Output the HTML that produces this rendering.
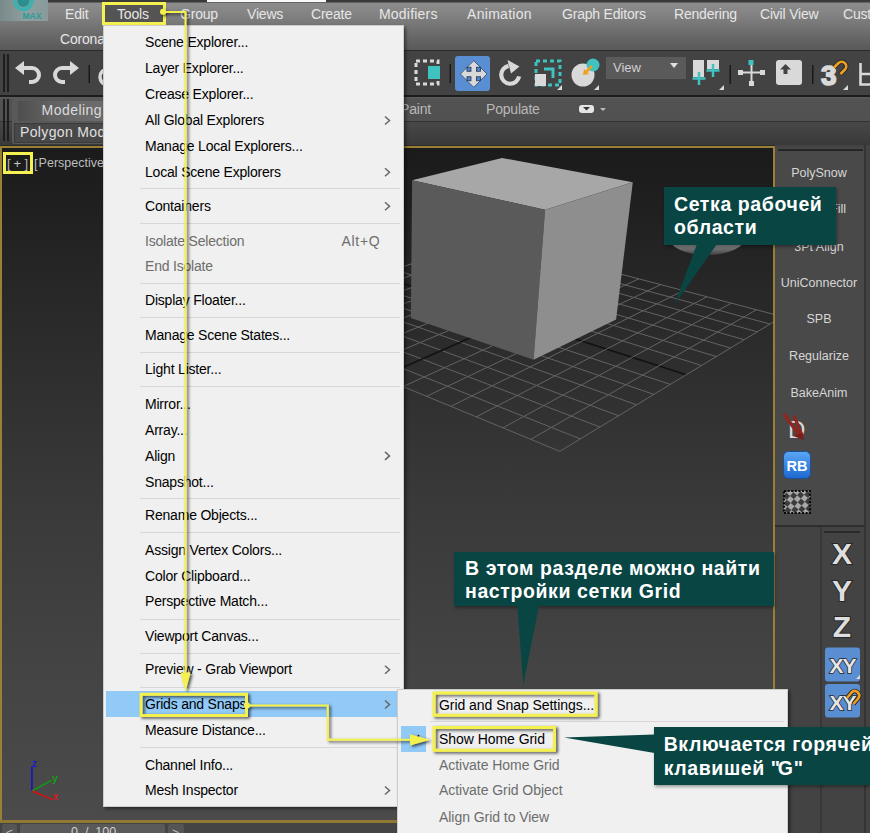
<!DOCTYPE html>
<html><head><meta charset="utf-8"><style>
html,body{margin:0;padding:0;width:870px;height:833px;overflow:hidden;background:#2b2b2b}
body{position:relative;font-family:"Liberation Sans",sans-serif}
.t{position:absolute;white-space:nowrap;line-height:1;font-family:"Liberation Sans",sans-serif}
</style></head><body>
<div style="position:absolute;left:0;top:0;width:870px;height:50px;background:linear-gradient(#3a3a3a 0px,#3a3a3a 2px,#8c8c8c 3px,#858585 12px,#767676 25px,#666666 38px,#5a5a5a 49px)"></div>
<div style="position:absolute;left:48px;top:0;width:822px;height:2px;background:#3a3a3a"></div>
<div style="position:absolute;left:207px;top:0;width:119px;height:1.5px;background:#fafafa"></div>
<div style="position:absolute;left:0;top:0;width:48px;height:20.5px;background:linear-gradient(90deg,#7a8a8a,#8fa0a0 55%,#889a9a)"></div>
<svg style="position:absolute;left:0;top:0" width="48" height="21"><circle cx="23.5" cy="1" r="8.5" fill="none" stroke="#3ab2b2" stroke-width="3.5"/><circle cx="23.5" cy="1" r="6" fill="#2b8f90"/><text x="22.5" y="18.6" font-family="Liberation Sans" font-weight="bold" font-size="9.5" fill="#2a9c9c" textLength="19" lengthAdjust="spacingAndGlyphs">MAX</text></svg>
<div class="t" style="left:65px;top:6.75px;font-size:14px;color:#e6e6e6;font-weight:400;letter-spacing:-0.2px;letter-spacing:-0.2px;">Edit</div>

<div class="t" style="left:180px;top:6.75px;font-size:14px;color:#e6e6e6;font-weight:400;letter-spacing:-0.2px;letter-spacing:-0.2px;">Group</div>

<div class="t" style="left:247px;top:6.75px;font-size:14px;color:#e6e6e6;font-weight:400;letter-spacing:-0.2px;letter-spacing:-0.2px;">Views</div>

<div class="t" style="left:311px;top:6.75px;font-size:14px;color:#e6e6e6;font-weight:400;letter-spacing:-0.2px;letter-spacing:-0.2px;">Create</div>

<div class="t" style="left:379px;top:6.75px;font-size:14px;color:#e6e6e6;font-weight:400;letter-spacing:-0.2px;letter-spacing:0.2px;">Modifiers</div>

<div class="t" style="left:467px;top:6.75px;font-size:14px;color:#e6e6e6;font-weight:400;letter-spacing:-0.2px;letter-spacing:0.3px;">Animation</div>

<div class="t" style="left:562px;top:6.75px;font-size:14px;color:#e6e6e6;font-weight:400;letter-spacing:-0.2px;letter-spacing:-0.2px;">Graph Editors</div>

<div class="t" style="left:674px;top:6.75px;font-size:14px;color:#e6e6e6;font-weight:400;letter-spacing:-0.2px;letter-spacing:-0.2px;">Rendering</div>

<div class="t" style="left:760px;top:6.75px;font-size:14px;color:#e6e6e6;font-weight:400;letter-spacing:-0.2px;letter-spacing:-0.2px;">Civil View</div>

<div class="t" style="left:843px;top:6.75px;font-size:14px;color:#e6e6e6;font-weight:400;letter-spacing:-0.2px;letter-spacing:-0.2px;">Customize</div>

<div class="t" style="left:60px;top:31.65px;font-size:14px;color:#e6e6e6;font-weight:400;letter-spacing:-0.2px;">Corona</div>

<div style="position:absolute;left:102px;top:2px;width:64px;height:23px;box-sizing:border-box;border:3px solid #f4f150;background:#545454"></div>
<div class="t" style="left:117px;top:6.75px;font-size:14px;color:#e6e6e6;font-weight:400;letter-spacing:-0.2px;">Tools</div>

<div style="position:absolute;left:0;top:49.5px;width:870px;height:1.5px;background:#2a2a2a"></div>
<div style="position:absolute;left:0;top:51px;width:870px;height:44.5px;background:#434343"></div>
<div style="position:absolute;left:0;top:95px;width:870px;height:2px;background:#1c1c1c"></div>
<div style="position:absolute;left:0;top:97px;width:870px;height:23.5px;background:linear-gradient(#5e5e5e 0px,#525252 2px,#515151 100%)"></div>
<div style="position:absolute;left:0;top:120.5px;width:870px;height:1.5px;background:#323232"></div>
<div style="position:absolute;left:0;top:122px;width:870px;height:22.5px;background:linear-gradient(#484848,#393939)"></div>
<div style="position:absolute;left:0;top:144.5px;width:870px;height:1px;background:#2a2a2a"></div>
<div style="position:absolute;left:3px;top:54px;width:1.5px;height:38px;background:#1e1e1e"></div>
<div style="position:absolute;left:3px;top:99px;width:1.5px;height:42px;background:#1e1e1e"></div>
<div style="position:absolute;left:7px;top:54px;width:1.5px;height:38px;background:#1e1e1e"></div>
<div style="position:absolute;left:7px;top:99px;width:1.5px;height:42px;background:#1e1e1e"></div>
<div style="position:absolute;left:12px;top:97.5px;width:100px;height:46px;background:#595959;border-radius:2px"></div>
<div style="position:absolute;left:18px;top:101px;width:95px;height:20px;background:linear-gradient(90deg,#4e4e4e,#626262 35%,#6a6a6a 70%,#6c6c6c)"></div>
<div class="t" style="left:41.6px;top:102.65px;font-size:14px;color:#dcdcdc;font-weight:400;letter-spacing:-0.2px;letter-spacing:0.45px;">Modeling</div>

<div style="position:absolute;left:14px;top:122.5px;width:100px;height:20.5px;background:#484848;border:1px solid #3a3a3a;box-sizing:border-box"></div>
<div class="t" style="left:20px;top:124.75px;font-size:14px;color:#e0e0e0;font-weight:400;letter-spacing:-0.2px;letter-spacing:0.35px;">Polygon Modeling</div>

<div class="t" style="left:400px;top:102.15px;font-size:14px;color:#b8b8b8;font-weight:400;letter-spacing:-0.2px;">Paint</div>

<div class="t" style="left:486px;top:102.15px;font-size:14px;color:#b8b8b8;font-weight:400;letter-spacing:-0.2px;">Populate</div>

<svg style="position:absolute;left:0;top:50px" width="870" height="46" viewBox="0 50 870 46">
<g fill="none" stroke="#d9d9d9" stroke-width="4" stroke-linecap="butt">
<path d="M22 68 H32 A7 7 0 0 1 32 82 H29"/>
<path d="M72 68 H62 A7 7 0 0 0 62 82 H65"/>
</g>
<path d="M15 68 L24 61 V75 Z" fill="#d9d9d9"/>
<path d="M79 68 L70 61 V75 Z" fill="#d9d9d9"/>
<rect x="88.5" y="65" width="1.5" height="18" fill="#1a1a1a"/>
<circle cx="108" cy="77" r="8" fill="none" stroke="#d9d9d9" stroke-width="3.5"/>
<rect x="449.5" y="64" width="1.5" height="19" fill="#1a1a1a"/>
<rect x="729.5" y="65" width="1.5" height="19" fill="#1a1a1a"/>
<rect x="812" y="65" width="1.5" height="19" fill="#1a1a1a"/>
<!-- select region -->
<rect x="416" y="61" width="22" height="23" fill="none" stroke="#d9d9d9" stroke-width="3" stroke-dasharray="4 3"/>
<rect x="428" y="66" width="12" height="13" fill="#3fc2c0"/>
<!-- move -->
<rect x="455" y="56" width="35" height="35" rx="3" fill="#5a8ed3"/>
<polygon points="473.70,60.70 480.20,67.20 478.90,68.80 480.50,67.50 487.00,74.00 480.50,80.50 478.90,79.20 480.20,80.80 473.70,87.30 467.20,80.80 468.50,79.20 466.90,80.50 460.40,74.00 466.90,67.50 468.50,68.80 467.20,67.20" fill="#d9d9d9" stroke="#3d5f8f" stroke-width="1"/>
<rect x="466.95" y="67.25" width="4" height="4" fill="#4f82c8" stroke="#2b3d5c" stroke-width="0.9"/><rect x="466.95" y="76.75" width="4" height="4" fill="#4f82c8" stroke="#2b3d5c" stroke-width="0.9"/><rect x="476.45" y="67.25" width="4" height="4" fill="#4f82c8" stroke="#2b3d5c" stroke-width="0.9"/><rect x="476.45" y="76.75" width="4" height="4" fill="#4f82c8" stroke="#2b3d5c" stroke-width="0.9"/>
<!-- rotate -->
<path d="M519.1 76.4 A9 9 0 1 1 508.6 65.9" fill="none" stroke="#d9d9d9" stroke-width="4.2"/>
<path d="M507.5 60 L519.5 66.5 L511 73.5 Z" fill="#d9d9d9"/>
<!-- scale -->
<rect x="536" y="61" width="24" height="24" fill="none" stroke="#3fc2c0" stroke-width="3" stroke-dasharray="4 3"/>
<path d="M544 69 H553 V78" fill="none" stroke="#3fc2c0" stroke-width="3"/>
<rect x="535" y="74" width="11" height="12" fill="#d9d9d9"/>
<path d="M557 90 L562 90 L562 85 Z" fill="#d9d9d9"/>
<!-- placement -->
<circle cx="583" cy="75" r="11.5" fill="#d9d9d9"/>
<circle cx="593" cy="65" r="6.5" fill="#3fc2c0"/>
<path d="M592 66 L585 73" stroke="#f0a020" stroke-width="2.5"/>
<path d="M583 75 L589 74 L584 69 Z" fill="#f0a020"/>
<path d="M594 90 L599 90 L599 85 Z" fill="#d9d9d9"/>
<!-- view dropdown -->
<rect x="606" y="57" width="80" height="22" fill="#5a5a5a"/>
<path d="M670 63 H678 L674 68 Z" fill="#e0e0e0"/>
<!-- mirror -->
<rect x="693" y="60" width="11" height="17" fill="#d9d9d9"/>
<rect x="707" y="60" width="12" height="9" fill="#d9d9d9"/>
<path d="M699 72 V85 M692.5 78.5 H705.5" stroke="#3fc2c0" stroke-width="2.5"/>
<path d="M713 64 V77 M706.5 70.5 H719.5" stroke="#3fc2c0" stroke-width="2.5"/>
<path d="M719 90 L724 90 L724 85 Z" fill="#d9d9d9"/>
<!-- align crosshair -->
<path d="M751.5 63 V85 M739 72.5 H764" stroke="#d9d9d9" stroke-width="2"/>
<rect x="748.5" y="60" width="5" height="5" fill="#3fc2c0"/>
<rect x="738" y="70" width="5" height="5" fill="#d9d9d9"/><rect x="760" y="70" width="5" height="5" fill="#d9d9d9"/>
<rect x="749" y="81" width="5" height="5" fill="#d9d9d9"/>
<!-- rounded square up -->
<rect x="776" y="60" width="26" height="25" rx="3" fill="#d9d9d9"/>
<path d="M785.5 64 L791 69.5 H787.5 V74 H783.5 V69.5 H780 Z" fill="#444"/>
<!-- 3 magnet -->
<text x="821" y="85" font-family="Liberation Sans" font-weight="bold" font-size="28" fill="#d9d9d9" stroke="#d9d9d9" stroke-width="1.6">3</text>
<path d="M834 67.5 L838.5 63 A4.6 4.6 0 0 1 845 69.5 L840.5 74" fill="none" stroke="#2a2a2a" stroke-width="4.4"/><path d="M834 67.5 L838.5 63 A4.6 4.6 0 0 1 845 69.5 L840.5 74" fill="none" stroke="#f0a020" stroke-width="2.6"/>
<path d="M843 90 L848 90 L848 85 Z" fill="#d9d9d9"/>
<path d="M860.5 63 V84.5 H871 M860.5 74 H871" fill="none" stroke="#d9d9d9" stroke-width="2.6"/>
</svg>
<div class="t" style="left:613px;top:61.00px;font-size:13px;color:#d0d0d0;font-weight:400;">View</div>

<svg style="position:absolute;left:575px;top:100px" width="40" height="18"><rect x="4" y="5" width="15" height="8" rx="3" fill="#e6e6e6"/><path d="M8 7 H15 L11.5 10.5 Z" fill="#333"/><path d="M25 8 H31 L28 11 Z" fill="#bbb"/></svg>
<div style="position:absolute;left:0;top:145.5px;width:775px;height:677px;box-sizing:border-box;border:2px solid #9a8034;background:linear-gradient(#1b1b1b 0%,#1f1f1f 8%,#282828 22%,#393939 52%,#434343 75%,#4b4b4b 100%)"></div>
<div style="position:absolute;left:775px;top:145px;width:95px;height:688px;background:#434343"></div>
<div style="position:absolute;left:775px;top:147.5px;width:90px;height:378px;background:#494949"></div>
<div style="position:absolute;left:778px;top:149px;width:85px;height:2px;background:#262626"></div>
<div style="position:absolute;left:864px;top:145px;width:2px;height:688px;background:#353535"></div>
<div style="position:absolute;left:775px;top:524.5px;width:90px;height:2px;background:#2e2e2e"></div>
<div style="position:absolute;left:820px;top:527px;width:1.5px;height:306px;background:#383838"></div>
<div style="position:absolute;left:824px;top:531px;width:36px;height:2px;background:#2a2a2a"></div>
<div class="t" style="left:746px;width:100px;text-align:right;top:203px;font-size:12.5px;color:#d6d6d6">PolyFill</div>
<div class="t" style="left:777px;width:84px;text-align:center;top:167px;font-size:12.5px;color:#d6d6d6">PolySnow</div>
<div class="t" style="left:777px;width:84px;text-align:center;top:240.5px;font-size:12.5px;color:#d6d6d6">3Pt Align</div>
<div class="t" style="left:777px;width:84px;text-align:center;top:276.7px;font-size:12.5px;color:#d6d6d6">UniConnector</div>
<div class="t" style="left:777px;width:84px;text-align:center;top:312.7px;font-size:12.5px;color:#d6d6d6">SPB</div>
<div class="t" style="left:777px;width:84px;text-align:center;top:350px;font-size:12.5px;color:#d6d6d6">Regularize</div>
<div class="t" style="left:777px;width:84px;text-align:center;top:386.5px;font-size:12.5px;color:#d6d6d6">BakeAnim</div>
<svg style="position:absolute;left:0;top:0" width="870" height="833"><defs><clipPath id="vp"><rect x="2" y="147" width="771" height="673"/></clipPath></defs><g clip-path="url(#vp)"><line x1="245.1" y1="321.4" x2="484.9" y2="238.4" stroke="#636363" stroke-width="1"/><line x1="245.1" y1="321.4" x2="559.8" y2="451.3" stroke="#636363" stroke-width="1"/><line x1="262.4" y1="328.5" x2="502.2" y2="242.9" stroke="#636363" stroke-width="1"/><line x1="266.0" y1="314.2" x2="580.3" y2="438.9" stroke="#636363" stroke-width="1"/><line x1="280.4" y1="335.9" x2="520.1" y2="247.6" stroke="#636363" stroke-width="1"/><line x1="286.2" y1="307.2" x2="599.9" y2="427.0" stroke="#636363" stroke-width="1"/><line x1="299.0" y1="343.6" x2="538.4" y2="252.4" stroke="#636363" stroke-width="1"/><line x1="305.7" y1="300.4" x2="618.6" y2="415.7" stroke="#636363" stroke-width="1"/><line x1="318.2" y1="351.6" x2="557.3" y2="257.4" stroke="#636363" stroke-width="1"/><line x1="324.6" y1="293.9" x2="636.6" y2="404.8" stroke="#636363" stroke-width="1"/><line x1="338.2" y1="359.8" x2="576.7" y2="262.5" stroke="#636363" stroke-width="1"/><line x1="342.9" y1="287.5" x2="653.9" y2="394.4" stroke="#636363" stroke-width="1"/><line x1="359.0" y1="368.4" x2="596.8" y2="267.8" stroke="#636363" stroke-width="1"/><line x1="360.7" y1="281.4" x2="670.4" y2="384.4" stroke="#636363" stroke-width="1"/><line x1="380.7" y1="377.3" x2="617.5" y2="273.2" stroke="#121212" stroke-width="1.6"/><line x1="377.9" y1="275.4" x2="686.3" y2="374.7" stroke="#121212" stroke-width="1.6"/><line x1="403.1" y1="386.6" x2="638.8" y2="278.9" stroke="#636363" stroke-width="1"/><line x1="394.6" y1="269.7" x2="701.6" y2="365.5" stroke="#636363" stroke-width="1"/><line x1="426.6" y1="396.3" x2="660.8" y2="284.6" stroke="#636363" stroke-width="1"/><line x1="410.7" y1="264.1" x2="716.4" y2="356.6" stroke="#636363" stroke-width="1"/><line x1="451.0" y1="406.3" x2="683.5" y2="290.6" stroke="#636363" stroke-width="1"/><line x1="426.4" y1="258.6" x2="730.5" y2="348.0" stroke="#636363" stroke-width="1"/><line x1="476.4" y1="416.8" x2="707.0" y2="296.8" stroke="#636363" stroke-width="1"/><line x1="441.7" y1="253.3" x2="744.2" y2="339.7" stroke="#636363" stroke-width="1"/><line x1="503.0" y1="427.8" x2="731.3" y2="303.2" stroke="#636363" stroke-width="1"/><line x1="456.5" y1="248.2" x2="757.4" y2="331.8" stroke="#636363" stroke-width="1"/><line x1="530.8" y1="439.3" x2="756.4" y2="309.8" stroke="#636363" stroke-width="1"/><line x1="470.9" y1="243.2" x2="770.1" y2="324.1" stroke="#636363" stroke-width="1"/><line x1="559.8" y1="451.3" x2="782.4" y2="316.6" stroke="#636363" stroke-width="1"/><line x1="484.9" y1="238.4" x2="782.4" y2="316.6" stroke="#636363" stroke-width="1"/>
<polygon points="412.1,180.2 502,158 632.8,182.2 545.1,209.8" fill="#a7a7a7"/>
<polygon points="412.1,180.2 545.1,209.8 533.6,359.8 410.9,318.1" fill="#5a5a5a"/>
<polygon points="545.1,209.8 632.8,182.2 616.1,319.5 533.6,359.8" fill="#8e8e8e"/>
<defs><linearGradient id="gz" x1="0" y1="0" x2="0" y2="1"><stop offset="0.6" stop-color="#a8a8a8"/><stop offset="1" stop-color="#404040"/></linearGradient></defs><ellipse cx="707" cy="238" rx="38" ry="17" fill="url(#gz)"/></g></svg>
<div style="position:absolute;left:3px;top:152px;width:30px;height:22px;box-sizing:border-box;border:3px solid #f4f150"></div>
<div class="t" style="left:7px;top:157.00px;font-size:13px;color:#b8b8b8;font-weight:400;">[</div>

<div class="t" style="left:13.5px;top:157.00px;font-size:13px;color:#c8c8c8;font-weight:400;">+</div>

<div class="t" style="left:24.5px;top:157.00px;font-size:13px;color:#b8b8b8;font-weight:400;">]</div>

<div class="t" style="left:34px;top:157.00px;font-size:13px;color:#b8b8b8;font-weight:400;">[</div>

<div class="t" style="left:38.6px;top:156.92px;font-size:12.5px;color:#bdbdbd;font-weight:400;">Perspective</div>

<svg style="position:absolute;left:20px;top:755px" width="50" height="50">
<path d="M11.9 36 V11.5" stroke="#1414c8" stroke-width="1.6"/>
<path d="M11.9 36 L31.7 25.2" stroke="#149614" stroke-width="1.6"/>
<path d="M11.9 36 L32.4 44.6" stroke="#d01414" stroke-width="1.6"/>
<text x="12" y="11.5" font-family="Liberation Sans" font-weight="bold" font-size="10" fill="#1a1ad0">z</text>
<text x="32" y="26.5" font-family="Liberation Sans" font-weight="bold" font-size="10.5" fill="#1a9a1a">y</text>
<text x="32.5" y="44.5" font-family="Liberation Sans" font-weight="bold" font-size="10" fill="#d81a1a">x</text>
</svg>
<div style="position:absolute;left:0;top:823px;width:775px;height:10px;background:#444"></div>
<div style="position:absolute;left:0;top:820px;width:775px;height:3px;background:#8e7832"></div>
<div style="position:absolute;left:2px;top:824px;width:15px;height:12px;background:#555;border-radius:2px"></div>
<div style="position:absolute;left:20px;top:824px;width:145px;height:12px;background:#5a5a5a;border-radius:2px"></div>
<div style="position:absolute;left:168px;top:824px;width:16px;height:12px;background:#555;border-radius:2px"></div>
<div class="t" style="left:71px;top:826.42px;font-size:12.5px;color:#d0d0d0;font-weight:400;">0&nbsp;&nbsp;/&nbsp;&nbsp;100</div>

<div class="t" style="left:6px;top:826.84px;font-size:12px;color:#c0c0c0;font-weight:400;">&lt;</div>

<div class="t" style="left:172px;top:826.84px;font-size:12px;color:#c0c0c0;font-weight:400;">&gt;</div>

<div style="position:absolute;left:103px;top:25px;width:301px;height:782px;background:#f0f0f0;border:1px solid #cdcdcd;box-sizing:border-box;box-shadow:2px 2px 3px rgba(0,0,0,0.45)"></div>
<div style="position:absolute;left:106px;top:691px;width:298px;height:26px;background:#91c9f7"></div>
<div style="position:absolute;left:140px;top:188.3px;width:260px;height:1px;background:#d7d7d7"></div>
<div style="position:absolute;left:140px;top:222.9px;width:260px;height:1px;background:#d7d7d7"></div>
<div style="position:absolute;left:140px;top:282.9px;width:260px;height:1px;background:#d7d7d7"></div>
<div style="position:absolute;left:140px;top:316.9px;width:260px;height:1px;background:#d7d7d7"></div>
<div style="position:absolute;left:140px;top:351.7px;width:260px;height:1px;background:#d7d7d7"></div>
<div style="position:absolute;left:140px;top:385.7px;width:260px;height:1px;background:#d7d7d7"></div>
<div style="position:absolute;left:140px;top:497.9px;width:260px;height:1px;background:#d7d7d7"></div>
<div style="position:absolute;left:140px;top:532.1px;width:260px;height:1px;background:#d7d7d7"></div>
<div style="position:absolute;left:140px;top:618.5px;width:260px;height:1px;background:#d7d7d7"></div>
<div style="position:absolute;left:140px;top:653.1px;width:260px;height:1px;background:#d7d7d7"></div>
<div style="position:absolute;left:140px;top:687.1px;width:260px;height:1px;background:#d7d7d7"></div>
<div style="position:absolute;left:140px;top:746.7px;width:260px;height:1px;background:#d7d7d7"></div>
<div class="t" style="left:145px;top:35.15px;font-size:14px;color:#000;font-weight:400;letter-spacing:-0.2px;">Scene Explorer...</div>

<div class="t" style="left:145px;top:61.15px;font-size:14px;color:#000;font-weight:400;letter-spacing:-0.2px;">Layer Explorer...</div>

<div class="t" style="left:145px;top:87.15px;font-size:14px;color:#000;font-weight:400;letter-spacing:-0.2px;">Crease Explorer...</div>

<div class="t" style="left:145px;top:113.15px;font-size:14px;color:#000;font-weight:400;letter-spacing:-0.2px;">All Global Explorers</div>

<div class="t" style="left:145px;top:139.15px;font-size:14px;color:#000;font-weight:400;letter-spacing:-0.2px;">Manage Local Explorers...</div>

<div class="t" style="left:145px;top:164.95px;font-size:14px;color:#000;font-weight:400;letter-spacing:-0.2px;">Local Scene Explorers</div>

<div class="t" style="left:145px;top:198.95px;font-size:14px;color:#000;font-weight:400;letter-spacing:-0.2px;">Containers</div>

<div class="t" style="left:145px;top:234.15px;font-size:14px;color:#6d6d6d;font-weight:400;letter-spacing:-0.2px;">Isolate Selection</div>

<div class="t" style="left:341.5px;top:234.15px;font-size:14px;color:#6d6d6d;font-weight:400;letter-spacing:-0.2px;letter-spacing:0.7px;">Alt+Q</div>

<div class="t" style="left:145px;top:258.85px;font-size:14px;color:#6d6d6d;font-weight:400;letter-spacing:-0.2px;">End Isolate</div>

<div class="t" style="left:145px;top:293.45px;font-size:14px;color:#000;font-weight:400;letter-spacing:-0.2px;">Display Floater...</div>

<div class="t" style="left:145px;top:327.75px;font-size:14px;color:#000;font-weight:400;letter-spacing:-0.2px;">Manage Scene States...</div>

<div class="t" style="left:145px;top:362.15px;font-size:14px;color:#000;font-weight:400;letter-spacing:-0.2px;">Light Lister...</div>

<div class="t" style="left:145px;top:396.55px;font-size:14px;color:#000;font-weight:400;letter-spacing:-0.2px;">Mirror...</div>

<div class="t" style="left:145px;top:422.55px;font-size:14px;color:#000;font-weight:400;letter-spacing:-0.2px;">Array...</div>

<div class="t" style="left:145px;top:448.55px;font-size:14px;color:#000;font-weight:400;letter-spacing:-0.2px;">Align</div>

<div class="t" style="left:145px;top:474.55px;font-size:14px;color:#000;font-weight:400;letter-spacing:-0.2px;">Snapshot...</div>

<div class="t" style="left:145px;top:508.45px;font-size:14px;color:#000;font-weight:400;letter-spacing:-0.2px;">Rename Objects...</div>

<div class="t" style="left:145px;top:542.95px;font-size:14px;color:#000;font-weight:400;letter-spacing:-0.2px;">Assign Vertex Colors...</div>

<div class="t" style="left:145px;top:568.65px;font-size:14px;color:#000;font-weight:400;letter-spacing:-0.2px;">Color Clipboard...</div>

<div class="t" style="left:145px;top:594.35px;font-size:14px;color:#000;font-weight:400;letter-spacing:-0.2px;">Perspective Match...</div>

<div class="t" style="left:145px;top:628.65px;font-size:14px;color:#000;font-weight:400;letter-spacing:-0.2px;">Viewport Canvas...</div>

<div class="t" style="left:145px;top:662.45px;font-size:14px;color:#000;font-weight:400;letter-spacing:-0.2px;">Preview - Grab Viewport</div>

<div class="t" style="left:145px;top:697.15px;font-size:14px;color:#000;font-weight:400;letter-spacing:-0.2px;">Grids and Snaps</div>

<div class="t" style="left:145px;top:723.15px;font-size:14px;color:#000;font-weight:400;letter-spacing:-0.2px;">Measure Distance...</div>

<div class="t" style="left:145px;top:757.65px;font-size:14px;color:#000;font-weight:400;letter-spacing:-0.2px;">Channel Info...</div>

<div class="t" style="left:145px;top:783.15px;font-size:14px;color:#000;font-weight:400;letter-spacing:-0.2px;">Mesh Inspector</div>

<svg style="position:absolute;left:0;top:0" width="870" height="833"><path d="M385 116.5 L389.5 120.5 L385 124.5" fill="none" stroke="#666" stroke-width="1.5"/><path d="M385 168.3 L389.5 172.3 L385 176.3" fill="none" stroke="#666" stroke-width="1.5"/><path d="M385 202.3 L389.5 206.3 L385 210.3" fill="none" stroke="#666" stroke-width="1.5"/><path d="M385 451.9 L389.5 455.9 L385 459.9" fill="none" stroke="#666" stroke-width="1.5"/><path d="M385 665.8 L389.5 669.8 L385 673.8" fill="none" stroke="#666" stroke-width="1.5"/><path d="M385 700.5 L389.5 704.5 L385 708.5" fill="none" stroke="#666" stroke-width="1.5"/><path d="M385 786.5 L389.5 790.5 L385 794.5" fill="none" stroke="#666" stroke-width="1.5"/></svg>
<div style="position:absolute;left:397px;top:688.5px;width:391px;height:156.5px;background:#f0f0f0;border:1px solid #cdcdcd;box-sizing:border-box;box-shadow:2px 2px 3px rgba(0,0,0,0.45)"></div>
<div style="position:absolute;left:430px;top:721.2px;width:354px;height:1px;background:#d7d7d7"></div>
<div style="position:absolute;left:401px;top:726px;width:25px;height:26px;background:#91c9f7"></div>
<svg style="position:absolute;left:408px;top:732px" width="14" height="14"><path d="M3 7 L6 10 L11 3" fill="none" stroke="#222" stroke-width="1.5"/></svg>
<div class="t" style="left:439px;top:698.15px;font-size:14px;color:#000;font-weight:400;letter-spacing:-0.2px;letter-spacing:-0.05px;">Grid and Snap Settings...</div>

<div class="t" style="left:439px;top:731.95px;font-size:14px;color:#000;font-weight:400;letter-spacing:-0.2px;letter-spacing:-0.05px;">Show Home Grid</div>

<div class="t" style="left:439px;top:757.85px;font-size:14px;color:#6d6d6d;font-weight:400;letter-spacing:-0.2px;letter-spacing:-0.05px;">Activate Home Grid</div>

<div class="t" style="left:439px;top:783.15px;font-size:14px;color:#6d6d6d;font-weight:400;letter-spacing:-0.2px;letter-spacing:-0.05px;">Activate Grid Object</div>

<div class="t" style="left:439px;top:809.55px;font-size:14px;color:#6d6d6d;font-weight:400;letter-spacing:-0.2px;letter-spacing:-0.05px;">Align Grid to View</div>

<div style="position:absolute;left:664px;top:187px;width:172px;height:57.5px;background:#094543;box-shadow:1px 2px 3px rgba(0,0,0,0.35)"></div>
<svg style="position:absolute;left:0;top:0" width="870" height="833"><polygon points="697,244 717,244 674.5,304.5" fill="#094543"/></svg>
<div class="t" style="left:674px;top:194.89px;font-size:19.5px;color:#fff;font-weight:700;letter-spacing:0.6px">Сетка рабочей</div>

<div class="t" style="left:674px;top:217.89px;font-size:19.5px;color:#fff;font-weight:700;letter-spacing:0.6px">области</div>

<div style="position:absolute;left:454.3px;top:551.8px;width:319.7px;height:54.700000000000045px;background:#094543;box-shadow:1px 2px 3px rgba(0,0,0,0.35)"></div>
<svg style="position:absolute;left:0;top:0" width="870" height="833"><polygon points="517.4,606 538.9,606 523.3,684.8" fill="#094543"/></svg>
<div class="t" style="left:465px;top:559.39px;font-size:19.5px;color:#fff;font-weight:700;letter-spacing:0.6px">В этом разделе можно найти</div>

<div class="t" style="left:465px;top:582.19px;font-size:19.5px;color:#fff;font-weight:700;letter-spacing:0.6px">настройки сетки Grid</div>

<div style="position:absolute;left:654px;top:727.3px;width:216px;height:57.700000000000045px;background:#094543;box-shadow:1px 2px 3px rgba(0,0,0,0.35)"></div>
<svg style="position:absolute;left:0;top:0" width="870" height="833"><polygon points="654.5,734.5 654.5,753 564,737.5" fill="#094543"/></svg>
<div class="t" style="left:663.7px;top:735.19px;font-size:19.5px;color:#fff;font-weight:700;letter-spacing:0.6px">Включается горячей</div>

<div class="t" style="left:663.7px;top:758.79px;font-size:19.5px;color:#fff;font-weight:700;letter-spacing:0.6px">клавишей <span style="letter-spacing:-2.2px">&quot;</span>G<span style="letter-spacing:-2px">&quot;</span></div>

<svg style="position:absolute;left:0;top:0" width="870" height="833">
<defs><filter id="sh" x="-20%" y="-20%" width="140%" height="140%"><feDropShadow dx="2" dy="1.5" stdDeviation="1.5" flood-color="#000" flood-opacity="0.7"/></filter></defs>
<g filter="url(#sh)">
<path d="M163 12 H185.5 V673" fill="none" stroke="#f4f150" stroke-width="2"/>
<polygon points="180.4,672.5 190.6,672.5 185.5,691.4" fill="#f4f150"/>
<circle cx="163" cy="11.8" r="3" fill="#f4f150"/>
<rect x="141" y="694.3" width="105.5" height="21.2" fill="none" stroke="#f4f150" stroke-width="3"/>
<path d="M247 705.5 H327.8 V739.8 H412" fill="none" stroke="#f4f150" stroke-width="2"/>
<polygon points="410,734.3 430,739.8 410,745.5" fill="#f4f150"/>
<circle cx="246.9" cy="705.5" r="3" fill="#f4f150"/>
<rect x="434" y="693" width="162" height="22.3" fill="none" stroke="#f4f150" stroke-width="3"/>
<rect x="434" y="727.5" width="120.5" height="22.8" fill="none" stroke="#f4f150" stroke-width="3"/>
</g>
</svg>
<svg style="position:absolute;left:775px;top:405px" width="95" height="120">
<defs>
<linearGradient id="rbg" x1="0" y1="0" x2="0" y2="1"><stop offset="0" stop-color="#5aa6f6"/><stop offset="1" stop-color="#1c68d0"/></linearGradient>
<pattern id="chk" width="10" height="10" patternUnits="userSpaceOnUse" patternTransform="rotate(40)"><rect width="10" height="10" fill="#3c3c3c"/><rect width="5" height="5" fill="#a8a8a8"/><rect x="5" y="5" width="5" height="5" fill="#a8a8a8"/></pattern>
</defs>
<text x="13" y="32.7" font-family="Liberation Sans" font-size="24" fill="#d8d8d8">D</text>
<path d="M9.5 10 L25 31" stroke="#8e2622" stroke-width="3.6" stroke-linecap="round"/>
<path d="M19.5 12 L27 30" stroke="#8e2622" stroke-width="3.2" stroke-linecap="round"/>
<path d="M18 31 L29 35 L27 28 Z" fill="#7a1e1a"/>
<rect x="8.5" y="46.5" width="27" height="27" rx="5" fill="url(#rbg)" stroke="#1a4f9a" stroke-width="1"/>
<text x="22" y="66" text-anchor="middle" font-family="Liberation Sans" font-weight="bold" font-size="14.5" fill="#fff">RB</text>
<rect x="9" y="86" width="26" height="22" fill="url(#chk)"/>
<rect x="9" y="86" width="26" height="22" fill="none" stroke="#0a0a0a" stroke-width="2.2" stroke-dasharray="2 1.6"/>
</svg>
<svg style="position:absolute;left:820px;top:535px" width="50" height="190">
<g font-family="Liberation Sans" font-weight="700" fill="#dedede" stroke="#262626" stroke-width="2" paint-order="stroke" text-anchor="middle">
<text x="22" y="29" font-size="30">X</text>
<text x="22" y="66" font-size="30">Y</text>
<text x="22" y="102" font-size="30">Z</text>
</g>
<rect x="5" y="112.5" width="35" height="34" rx="3" fill="#5a8ed3"/>
<rect x="5" y="149" width="35" height="33.5" rx="3" fill="#5a8ed3"/>
<g font-family="Liberation Sans" font-weight="700" fill="#e6e6e6" stroke="#2a2a2a" stroke-width="1.6" paint-order="stroke" text-anchor="middle">
<text x="22.5" y="138" font-size="21" letter-spacing="-1">XY</text>
<text x="22.5" y="174.5" font-size="21" letter-spacing="-1">XY</text>
</g>
<path d="M36 144 L40 144 L40 140 Z" fill="#ddd"/>
<path d="M27 163 L32 157 A4.5 4.5 0 0 1 38.5 163 L33.5 169" fill="none" stroke="#2a2a2a" stroke-width="4.5"/>
<path d="M27 163 L32 157 A4.5 4.5 0 0 1 38.5 163 L33.5 169" fill="none" stroke="#f0a020" stroke-width="2.6"/>
</svg>
</body></html>
